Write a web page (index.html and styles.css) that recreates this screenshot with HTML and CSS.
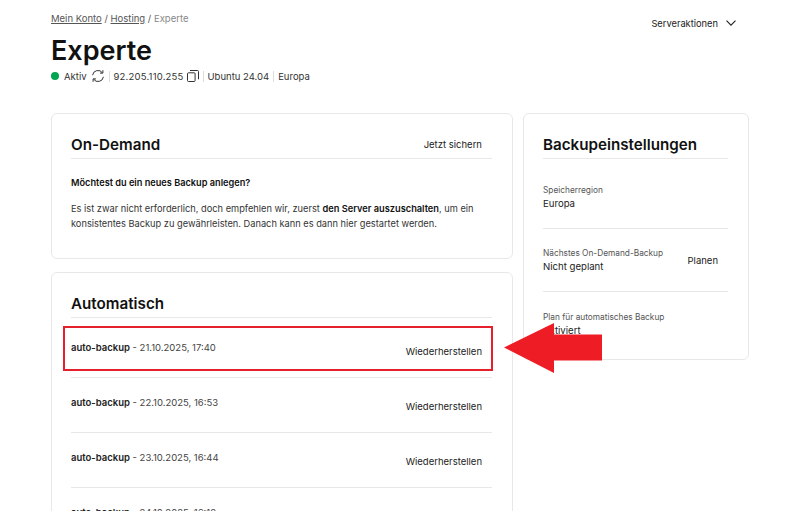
FILE: index.html
```html
<!DOCTYPE html>
<html lang="de">
<head>
<meta charset="utf-8">
<title>Experte</title>
<link rel="stylesheet" href="styles.css">
</head>
<body>
<div class="page">
  <header class="top">
    <div class="top-left">
      <nav class="crumbs"><a>Mein Konto</a> / <a>Hosting</a> / <span class="current">Experte</span></nav>
      <h1 class="title">Experte</h1>
      <div class="status">
        <span class="dot"></span><span>Aktiv</span>
        <svg class="ico-sync" viewBox="0 0 14 14" width="14" height="14" fill="none" stroke="#333" stroke-width="1"><path d="M1.6 6.2A5.4 5.4 0 0 1 11.4 3.8"/><path d="M11.9 1.2v2.9H9"/><path d="M12.4 7.8A5.4 5.4 0 0 1 2.6 10.2"/><path d="M2.1 12.800V9.900H5"/></svg>
        <span class="sep"></span><span class="ip">92.205.110.255</span>
        <svg class="ico-copy" viewBox="0 0 12 12" width="12" height="12" fill="none" stroke="#333" stroke-width="1"><rect x="0.5" y="2.8" width="7.6" height="8.7" rx="1"/><path d="M3 .5h7.500a1 1 0 0 1 1 1v7.800"/></svg>
        <span class="sep"></span><span>Ubuntu 24.04</span>
        <span class="sep"></span><span>Europa</span>
      </div>
    </div>
    <button class="actions">Serveraktionen
      <svg viewBox="0 0 10 6" width="10" height="6" fill="none" stroke="#222" stroke-width="1.1"><path d="M.5.6 5 5.200 9.500.6"/></svg>
    </button>
  </header>

  <main class="columns">
    <div class="col-main">
      <section class="card card-demand">
        <div class="card-head"><h2>On-Demand</h2><a class="link">Jetzt sichern</a></div>
        <p class="question">Möchtest du ein neues Backup anlegen?</p>
        <p class="copy">Es ist zwar nicht erforderlich, doch empfehlen wir, zuerst <b>den Server auszuschalten</b>, um ein konsistentes Backup zu gewährleisten. Danach kann es dann hier gestartet werden.</p>
      </section>
      <section class="card card-auto">
        <div class="card-head"><h2>Automatisch</h2></div>
        <div class="backup"><span><b>auto-backup</b> - 21.10.2025, 17:40</span><a class="link restore">Wiederherstellen</a></div>
        <div class="backup"><span><b>auto-backup</b> - 22.10.2025, 16:53</span><a class="link restore">Wiederherstellen</a></div>
        <div class="backup"><span><b>auto-backup</b> - 23.10.2025, 16:44</span><a class="link restore">Wiederherstellen</a></div>
        <div class="backup"><span><b>auto-backup</b> - 24.10.2025, 16:18</span><a class="link restore">Wiederherstellen</a></div>
      </section>
    </div>
    <aside class="col-side">
      <section class="card card-settings">
        <div class="card-head"><h2>Backupeinstellungen</h2></div>
        <div class="setting setting-first"><div><div class="label">Speicherregion</div><div class="value">Europa</div></div></div>
        <div class="setting"><div><div class="label">Nächstes On-Demand-Backup</div><div class="value">Nicht geplant</div></div><a class="link plan">Planen</a></div>
        <div class="setting"><div><div class="label">Plan für automatisches Backup</div><div class="value">Aktiviert</div></div></div>
      </section>
    </aside>
  </main>
</div>
<div class="mark-box"></div>
<svg class="mark-arrow" viewBox="0 0 98 50" width="98" height="50"><path fill="#ee1c25" d="M0 24.500 50 0V11.500H98V37.500H50V50Z"/></svg>
</body>
</html>
```
FILE: styles.css
```css
* { box-sizing: border-box; }
html, body { margin: 0; height: 511px; overflow: hidden; background: #fff; }
body { font-family: Inter, "Liberation Sans", sans-serif; font-size: 9.5px; color: #222; position: relative; }
.page { padding: 0 51px; width: 800px; }
.top { display: flex; justify-content: space-between; height: 113px; }
.crumbs { padding-top: 12px; line-height: 13px; color: #555; }
.crumbs a { text-decoration: underline; }
.current { color: #888; }
.title { margin: 9px 0 0; font-size: 27px; line-height: 34px; font-weight: 600; color: #111; }
.status { display: flex; align-items: center; gap: 4px; height: 16px; margin-top: 0; color: #333; }
.dot { width: 8px; height: 8px; border-radius: 50%; background: #00a64f; margin-right: 1px; }
.ip { letter-spacing: .2px; }
.ico-copy { margin-left: -1px; }
.sep { width: 1px; height: 11px; background: #ddd; }
.actions { display: flex; align-items: center; gap: 8px; height: 24px; margin: 11px 13px 0 0; padding: 0; border: 0; background: none; font: inherit; font-size: 9.3px; color: #222; }
.columns { display: grid; grid-template-columns: 462px 226px; gap: 10px; align-items: start; }
.col-main { display: flex; flex-direction: column; gap: 13px; }
.card { border: 1px solid #e8e8e8; border-radius: 6px; padding: 0 20px 0 19px; background: #fff; }
.card-head { display: flex; justify-content: space-between; align-items: center; height: 45px; padding-top: 17px; border-bottom: 1px solid #e8e8e8; }
.card-head h2 { margin: 0; font-size: 15.2px; font-weight: 600; color: #111; }
.card-head .link { padding-right: 10px; }
.link { color: #222; }
.card-demand { height: 146px; }
.question { margin: 17px 0 0; font-size: 9.2px; font-weight: 600; line-height: 14px; color: #111; }
.copy { margin: 11px 0 0; font-size: 9.25px; line-height: 15px; color: #333; }
.copy b { font-weight: 600; color: #111; }
.card-auto { height: 300px; }
.backup { display: flex; justify-content: space-between; height: 55px; padding: 18px 10px 0 0; border-bottom: 1px solid #e8e8e8; line-height: 14px; color: #444; }
.backup b { font-weight: 600; color: #222; }
.card-auto .card-head { margin-bottom: 5px; }
.restore { margin-top: 4px; }
.card-settings { height: 247px; }
.setting { display: flex; justify-content: space-between; align-items: center; height: 63px; padding-right: 10px; border-bottom: 1px solid #e8e8e8; }
.setting-first { height: 70px; padding-top: 7px; }
.setting:last-child { border-bottom: 0; }
.label { font-size: 8.3px; line-height: 13px; color: #555; }
.value { font-size: 9.6px; line-height: 13px; color: #222; }
.mark-box { position: absolute; left: 63px; top: 326px; width: 430px; height: 45px; border: 2px solid #e51f2b; }
.mark-arrow { position: absolute; left: 504px; top: 323px; }
```
